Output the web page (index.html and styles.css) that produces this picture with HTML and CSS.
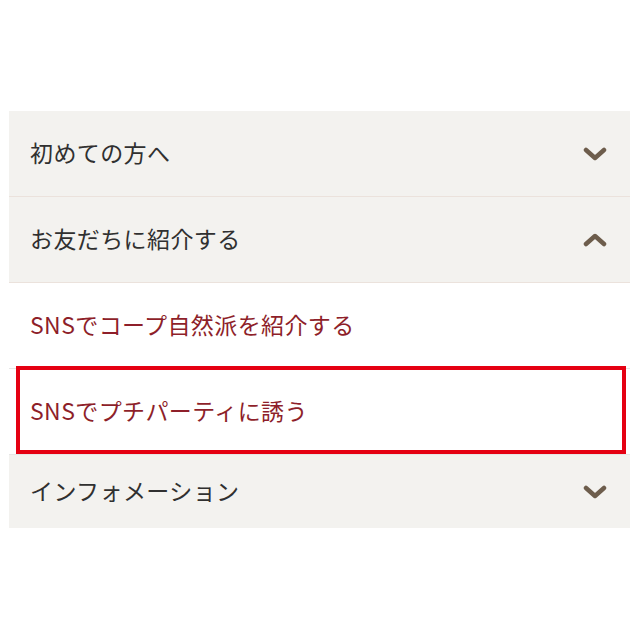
FILE: index.html
```html
<!DOCTYPE html>
<html lang="ja">

<head>
    <meta charset="UTF-8">
    <meta name="viewport" content="width=device-width, initial-scale=1.0">
    <title>メニュー</title>
    <link rel="stylesheet" href="styles.css">
</head>

<body>
    <!-- アコーディオンメニュー -->
    <ul class="menu">
        <li class="menu-item">
            <span>初めての方へ</span>
            <svg class="chevron" width="24" height="14" viewBox="0 0 24 14">
                <path d="M3 3 L12 11 L21 3" />
            </svg>
        </li>
        <li class="menu-item">
            <span>お友だちに紹介する</span>
            <svg class="chevron" width="24" height="14" viewBox="0 0 24 14">
                <path d="M3 11 L12 3 L21 11" />
            </svg>
        </li>
        <li class="menu-item sub">
            <span>SNSでコープ自然派を紹介する</span>
        </li>
        <li class="menu-item sub marked">
            <span>SNSでプチパーティに誘う</span>
        </li>
        <li class="menu-item last">
            <span>インフォメーション</span>
            <svg class="chevron" width="24" height="14" viewBox="0 0 24 14">
                <path d="M3 3 L12 11 L21 3" />
            </svg>
        </li>
    </ul>
</body>

</html>
```

FILE: styles.css
```css
/* Estilos de la menu */
body {
    margin: 0;
    padding: 111px 10px 0 9px;
    background-color: #fff;
    font-family: "Noto Sans CJK JP", "Noto Sans", sans-serif;
}

.menu {
    list-style: none;
    margin: 0;
    padding: 0;
    background-color: #f3f2ef;
}

.menu-item {
    position: relative;
    display: flex;
    align-items: center;
    justify-content: space-between;
    height: 85px;
    padding: 0 23px 0 21px;
    border-bottom: 1px solid #ebe2dc;
    font-size: 23px;
    letter-spacing: 0.4px;
    color: #303030;
}

.menu-item span {
    margin-top: -3px;
}

.menu-item.sub {
    background-color: #fff;
    color: #8e1f2a;
    border-bottom-color: #e6e6e6;
}

.menu-item.last {
    height: 73px;
    border-bottom: none;
}

.marked::after {
    content: "";
    position: absolute;
    left: 7px;
    right: 4px;
    top: -3px;
    bottom: 0;
    border: 4px solid #e50012;
}

.chevron path {
    fill: none;
    stroke: #6d5d4c;
    stroke-width: 4.5;
    stroke-linecap: round;
    stroke-linejoin: round;
}
```
